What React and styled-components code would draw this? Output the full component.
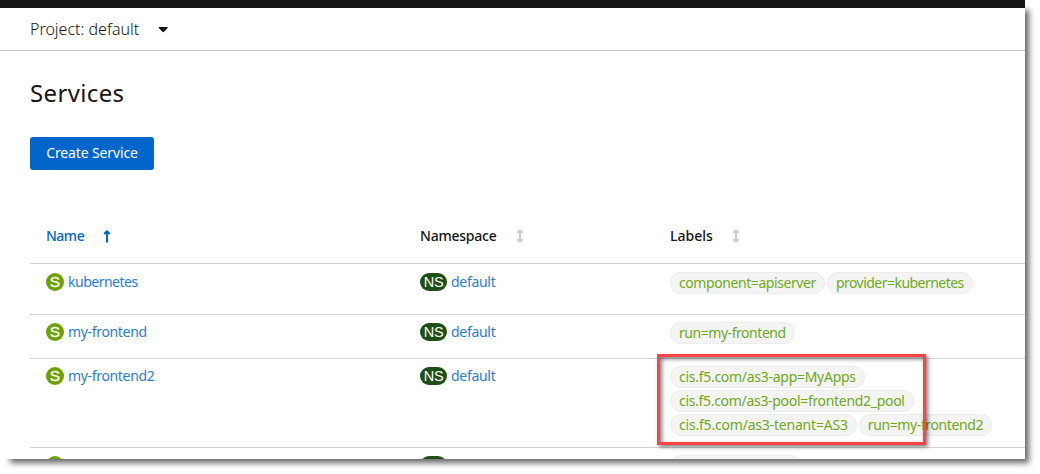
import React from "react";
import styled, { createGlobalStyle } from "styled-components";

const GlobalStyle = createGlobalStyle`
  body { margin: 0; background: #fff; font-family: "Noto Sans", "Open Sans", sans-serif; }
  * { box-sizing: border-box; }
`;

const Screen = styled.div`
  position: relative;
  width: 1040px;
  height: 474px;
  overflow: hidden;
`;

const Page = styled.div`
  width: 1025px;
  height: 459px;
  background: #fff;
  box-shadow: 7px 7px 6px -3px rgba(0, 0, 0, 0.6);
`;

const Clip = styled.div`
  height: 459px;
  overflow: hidden;
`;

const Masthead = styled.div`
  height: 8px;
  background: #151515;
`;

const ProjectBar = styled.div`
  display: flex;
  align-items: center;
  gap: 19px;
  height: 43px;
  padding: 0 30px;
  border-bottom: 1px solid #c9c9c9;
  color: #151515;
`;

const Txt = styled.span`
  font-size: ${(p) => p.$size || 14}px;
  font-weight: ${(p) => p.$weight || 400};
  letter-spacing: ${(p) => p.$ls || 0}px;
  line-height: 20px;
  white-space: nowrap;
`;

const Heading = styled.h1`
  margin: 0;
  padding: 24px 30px 0;
  height: 86px;
  font-size: 24px;
  font-weight: 400;
  line-height: 36px;
  letter-spacing: 0.35px;
  color: #151515;
`;

const CreateButton = styled.button`
  display: flex;
  align-items: center;
  justify-content: center;
  width: 124px;
  height: 33px;
  margin: 0 0 0 30px;
  padding: 0 0 1px;
  border: 0;
  border-radius: 3px;
  background: #06c;
  color: #fff;
  font-family: inherit;
`;

const Table = styled.div`
  margin: 39px 0 0 30px;
`;

const Row = styled.div`
  display: grid;
  grid-template-columns: 374px 250px 1fr;
  height: ${(p) => p.$h}px;
  padding: ${(p) => p.$top || 0}px 0 0 16px;
  border-bottom: 1px solid #d2d2d2;
`;

const HeadCell = styled.div`
  display: flex;
  align-items: center;
  height: 54px;
  gap: 19px;
  color: ${(p) => (p.$active ? "#06c" : "#151515")};
`;

const Cell = styled.div`
  display: flex;
  align-items: center;
  height: 18px;
  gap: 4px;
  color: #2b7cd3;
`;

const Badge = styled.span`
  display: flex;
  align-items: center;
  justify-content: center;
  width: ${(p) => (p.$ns ? 27 : 18)}px;
  height: 18px;
  border-radius: 9px;
  background: ${(p) => (p.$ns ? "#1e4f18" : "#6ca100")};
  color: #fff;
  font-family: "Liberation Sans", Arial, sans-serif;
  font-size: ${(p) => (p.$ns ? 14.5 : 15.5)}px;
  letter-spacing: ${(p) => (p.$ns ? -0.4 : 0)}px;
  -webkit-text-stroke: ${(p) => (p.$ns ? 0 : 0.3)}px #fff;
  line-height: 18px;
`;

const Labels = styled.div`
  display: flex;
  flex-wrap: wrap;
  align-content: flex-start;
  gap: 2px;
  width: 340px;
  margin-top: -1px;
`;

const Chip = styled.span`
  display: flex;
  align-items: center;
  height: 22px;
  min-width: ${(p) => p.$min || 0}px;
  padding: 0 8px;
  border: 1px solid #ececec;
  border-radius: 11px;
  background: #f4f4f4;
  color: #6fa91c;
`;

const Highlight = styled.div`
  position: absolute;
  left: 657px;
  top: 354px;
  width: 269px;
  height: 91px;
  border: 3px solid #fd4444;
  box-shadow: 2px 2px 4px rgba(0, 0, 0, 0.5), inset 2px 2px 4px rgba(0, 0, 0, 0.5);
`;

const CaretIcon = styled.svg`
  margin-top: 2px;
`;

const Caret = () => (
  <CaretIcon width="11" height="6" viewBox="0 0 11 6" fill="#151515">
    <path d="M1.2 0h8.1q1 .1.3 1L6 4.8q-.8.7-1.6 0L.8 1Q.2.1 1.2 0z" />
  </CaretIcon>
);

const SortUp = () => (
  <svg width="8" height="13" viewBox="0 0 8 13" fill="#06c">
    <path d="M4 0l3.2 3v1.3H5V12.6H3V4.3H.8V3z" />
  </svg>
);

const SortBoth = () => (
  <svg width="8" height="14" viewBox="0 0 8 14" fill="#d2d2d2">
    <path d="M4 0l3.2 2.6v1.6H5v5.6h2.2v1.6L4 14 .8 11.4V9.8H3V4.2H.8V2.6z" />
  </svg>
);

const services = [
  {
    name: "kubernetes",
    ls: -0.5,
    h: 51,
    top: 9,
    labels: [["component=apiserver", -0.42], ["provider=kubernetes", -0.53]],
  },
  { name: "my-frontend", ls: -0.33, h: 44, top: 8, labels: [["run=my-frontend", -0.45]] },
  {
    name: "my-frontend2",
    ls: -0.33,
    h: 89,
    top: 8,
    labels: [
      ["cis.f5.com/as3-app=MyApps", -0.28],
      ["cis.f5.com/as3-pool=frontend2_pool", -0.31],
      ["cis.f5.com/as3-tenant=AS3", -0.2],
      ["run=my-frontend2", -0.38],
    ],
  },
];

export default function App() {
  return (
    <Screen>
      <GlobalStyle />
      <Page>
        <Clip>
          <Masthead />
          <ProjectBar>
            <Txt $size={16} $weight={300}>Project: default</Txt>
            <Caret />
          </ProjectBar>
          <Heading>Services</Heading>
          <CreateButton><Txt $ls={-0.14}>Create Service</Txt></CreateButton>
          <Table>
            <Row $h={55}>
              <HeadCell $active><Txt $weight={500} $ls={-0.5}>Name</Txt><SortUp /></HeadCell>
              <HeadCell><Txt $weight={500} $ls={-0.22}>Namespace</Txt><SortBoth /></HeadCell>
              <HeadCell><Txt $weight={500}>Labels</Txt><SortBoth /></HeadCell>
            </Row>
            {services.map((s) => (
              <Row key={s.name} $h={s.h} $top={s.top}>
                <Cell><Badge>S</Badge><Txt $ls={s.ls}>{s.name}</Txt></Cell>
                <Cell><Badge $ns>NS</Badge><Txt $ls={-0.3}>default</Txt></Cell>
                <Labels>
                  {s.labels.map(([text, ls]) => <Chip key={text}><Txt $ls={ls}>{text}</Txt></Chip>)}
                </Labels>
              </Row>
            ))}
            <Row $h={44} $top={8}>
              <Cell><Badge /></Cell>
              <Cell><Badge $ns /></Cell>
              <Labels><Chip $min={131} /></Labels>
            </Row>
          </Table>
        </Clip>
      </Page>
      <Highlight />
    </Screen>
  );
}
